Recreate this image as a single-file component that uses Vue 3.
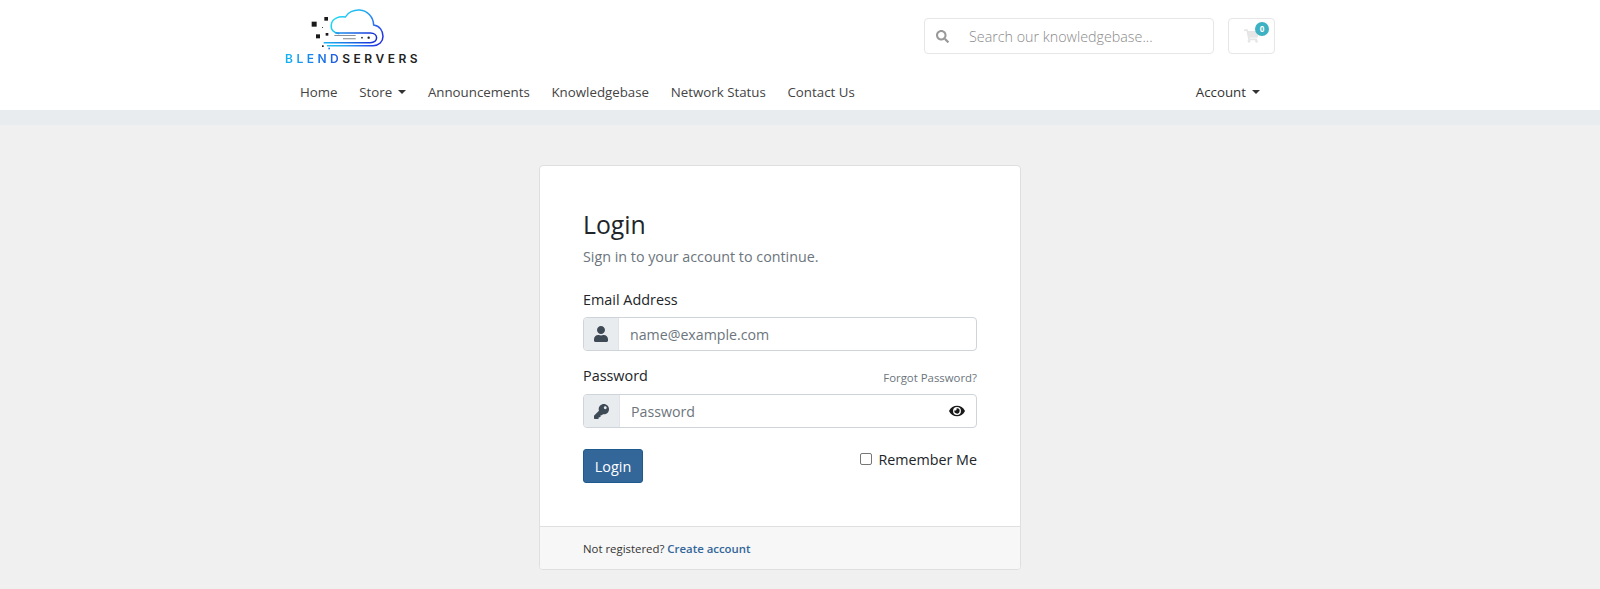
<script setup>
const navLeft = [
  { label: 'Home' },
  { label: 'Store', caret: true },
  { label: 'Announcements' },
  { label: 'Knowledgebase' },
  { label: 'Network Status' },
  { label: 'Contact Us' },
]
</script>

<template>
  <div class="page">
    <header class="header">
      <div class="container top">
        <div class="logo">
          <svg class="logo-mark" width="80" height="45" viewBox="110 20 240 135">
            <defs>
              <linearGradient id="lg" gradientUnits="userSpaceOnUse" x1="190" y1="40" x2="340" y2="135">
                <stop offset="0" stop-color="#1fdcf2" />
                <stop offset="0.45" stop-color="#22a8f2" />
                <stop offset="0.75" stop-color="#2a5cf0" />
                <stop offset="1" stop-color="#1a1fd6" />
              </linearGradient>
              <linearGradient id="lb" gradientUnits="userSpaceOnUse" x1="160" y1="125" x2="330" y2="125">
                <stop offset="0" stop-color="#19b4f2" />
                <stop offset="1" stop-color="#1a1fd6" />
              </linearGradient>
            </defs>
            <path d="M207 100 C190 98 180 88 183 72 C186 55 205 47 225 50 C232 36 250 28 268 29 C292 31 309 50 310 74 C328 76 338 92 338 108 C338 124 326 136 308 136 L170 136" fill="none" stroke="url(#lg)" stroke-width="4.500" />
            <path d="M160 127 L300 127 C325 127 325 98 300 98 L195 98" fill="none" stroke="url(#lb)" stroke-width="4.500" />
            <rect x="192" y="104" width="64" height="3" fill="#8a8f98" />
            <rect x="218" y="113" width="38" height="4" fill="#a0a4aa" />
            <rect x="124" y="64" width="15" height="15" fill="#1a1a1a" />
            <rect x="162" y="50" width="11" height="11" fill="#1a1a1a" />
            <rect x="137" y="102" width="12" height="12" fill="#1a1a1a" />
            <rect x="166" y="98" width="8" height="8" fill="#1a1a1a" />
            <rect x="155" y="80" width="3" height="3" fill="#444" />
            <rect x="155" y="135" width="5" height="5" fill="#1a1a1a" />
            <rect x="174" y="142" width="5" height="5" fill="#2a7cf0" />
            <circle cx="275" cy="112" r="2.500" fill="#1a1a1a" />
            <circle cx="295" cy="112" r="3.500" fill="#1a1a1a" />
          </svg>
          <div class="logo-text"><span class="blend">BLEND</span><span>SERVERS</span></div>
        </div>
        <div class="tools">
          <div class="search">
            <svg class="search-icon" width="13" height="13" viewBox="0 0 512 512"><path fill="#999" d="M505 442.7L405.3 343c-4.500-4.500-10.600-7-17-7H372c27.600-35.300 44-79.700 44-128C416 93.100 322.900 0 208 0S0 93.100 0 208s93.100 208 208 208c48.300 0 92.700-16.400 128-44v16.300c0 6.400 2.500 12.500 7 17l99.700 99.700c9.400 9.400 24.600 9.400 33.900 0l28.300-28.300c9.400-9.400 9.400-24.600.1-34zM208 336c-70.700 0-128-57.200-128-128 0-70.700 57.200-128 128-128 70.700 0 128 57.200 128 128 0 70.700-57.200 128-128 128z"/></svg>
            <span class="search-text">Search our knowledgebase...</span>
          </div>
          <div class="cart">
            <svg width="15" height="14" viewBox="0 0 576 512"><path fill="#e6e6e6" d="M528.100 301.300l47.300-208C578.800 78.300 567.400 64 552 64H159.200l-9.200-44.800C147.800 8 137.900 0 126.500 0H24C10.700 0 0 10.700 0 24v16c0 13.300 10.700 24 24 24h69.900l70.200 343.400C147.300 417.100 136 435.200 136 456c0 30.900 25.100 56 56 56s56-25.100 56-56c0-15.700-6.400-29.800-16.800-40h209.600C430.400 426.200 424 440.300 424 456c0 30.900 25.100 56 56 56s56-25.100 56-56c0-22.200-12.900-41.300-31.600-50.400l5.500-24.300c3.400-15-8-29.300-23.400-29.300H218.100l-6.500-32h293.100c11.200 0 20.900-7.800 23.400-18.700z"/></svg>
            <span class="badge">0</span>
          </div>
        </div>
      </div>
      <nav class="container nav">
        <div class="nav-group">
          <a v-for="item in navLeft" :key="item.label" class="nav-link">
            {{ item.label }}<i v-if="item.caret" class="caret"></i>
          </a>
        </div>
        <a class="nav-link account">Account<i class="caret"></i></a>
      </nav>
    </header>
    <div class="strip"></div>
    <main class="main">
      <section class="card">
        <div class="card-body">
          <h1 class="title">Login</h1>
          <p class="subtitle">Sign in to your account to continue.</p>

          <label class="label">Email Address</label>
          <div class="group">
            <span class="addon">
              <svg width="14" height="16" viewBox="0 0 448 512"><path fill="#3f4a57" d="M224 256c70.700 0 128-57.300 128-128S294.700 0 224 0 96 57.300 96 128s57.300 128 128 128zm89.600 32h-16.700c-22.200 10.200-46.900 16-72.900 16s-50.600-5.800-72.900-16h-16.700C60.200 288 0 348.200 0 422.400V464c0 26.500 21.500 48 48 48h352c26.500 0 48-21.500 48-48v-41.600c0-74.200-60.200-134.400-134.400-134.400z"/></svg>
            </span>
            <span class="placeholder">name@example.com</span>
          </div>

          <div class="pw-head">
            <label class="label flush">Password</label>
            <a class="forgot">Forgot Password?</a>
          </div>
          <div class="group">
            <span class="addon wide">
              <svg width="15" height="15" viewBox="0 0 512 512"><path fill="#3f4a57" d="M512 176.001C512 273.203 433.202 352 336 352c-11.220 0-22.190-1.062-32.827-3.069l-24.012 27.014A23.999 23.999 0 0 1 261.223 384H224v40c0 13.255-10.745 24-24 24h-40v40c0 13.255-10.745 24-24 24H24c-13.255 0-24-10.745-24-24v-78.059c0-6.365 2.529-12.470 7.029-16.971l161.802-161.802C163.108 213.814 160 195.271 160 176 160 78.798 238.797.001 335.999 0 433.488-.001 512 78.511 512 176.001zM336 128c0 26.510 21.490 48 48 48s48-21.490 48-48-21.490-48-48-48-48 21.490-48 48z"/></svg>
            </span>
            <span class="placeholder">Password</span>
            <svg class="eye" width="18" height="14" viewBox="0 0 576 512"><path fill="#1a1a1a" d="M572.520 241.400C518.290 135.590 410.930 64 288 64S57.680 135.640 3.480 241.410a32.350 32.350 0 0 0 0 29.190C57.710 376.410 165.070 448 288 448s230.320-71.640 284.520-177.410a32.350 32.350 0 0 0 0-29.190zM288 400a144 144 0 1 1 144-144 143.930 143.930 0 0 1-144 144zm0-240a95.310 95.310 0 0 0-25.310 3.790 47.850 47.850 0 0 1-66.900 66.900A95.780 95.780 0 1 0 288 160z"/></svg>
          </div>

          <div class="actions">
            <button class="btn" type="button">Login</button>
            <label class="remember"><span class="check"></span>Remember Me</label>
          </div>
        </div>
        <div class="card-footer">
          Not registered? <a class="create">Create account</a>
        </div>
      </section>
    </main>
  </div>
</template>

<style scoped>
.page {
  min-height: 589px;
  background: #f0f0f0;
  font-family: "Open Sans", sans-serif;
  color: #212529;
  overflow: hidden;
}
.header { background: #fff; height: 110px; padding-right: 40px; }
.container { width: 990px; margin: 0 auto; }
.top { display: flex; justify-content: space-between; height: 74px; }
.logo { width: 140px; padding-top: 7px; }
.logo-mark { display: block; margin-left: 22px; }
.logo-text {
  margin-top: 1px;
  font-family: Inter, sans-serif;
  font-size: 12px;
  line-height: 12px;
  font-weight: 600;
  letter-spacing: 3.5px;
  color: #222;
  white-space: nowrap;
}
.blend {
  background: linear-gradient(90deg, #12b4f5, #1c50e0);
  -webkit-background-clip: text;
  background-clip: text;
  color: transparent;
}
.tools { display: flex; gap: 14px; padding-top: 18px; }
.search {
  width: 290px;
  height: 36px;
  box-sizing: border-box;
  border: 1px solid #e6e6e6;
  border-radius: 4px;
  display: flex;
  align-items: center;
  padding-left: 11px;
  gap: 20px;
}
.search-icon { flex: none; }
.search-text { font-size: 14.3px; color: #8a8a8a; font-weight: 300; }
.cart {
  position: relative;
  width: 47px;
  height: 36px;
  box-sizing: border-box;
  border: 1px solid #e6e6e6;
  border-radius: 4px;
  display: flex;
  align-items: center;
  justify-content: center;
}
.badge {
  position: absolute;
  top: 3px;
  right: 5px;
  width: 14px;
  height: 14px;
  border-radius: 50%;
  background: #3eb1c2;
  color: #fff;
  font-size: 8px;
  font-weight: 700;
  line-height: 14px;
  text-align: center;
}
.nav { display: flex; justify-content: space-between; height: 36px; align-items: center; }
.nav-group { display: flex; gap: 21.7px; padding-left: 15px; }
.nav-link { font-size: 13.3px; color: #444; line-height: 20px; white-space: nowrap; }
.account { margin-right: 15px; color: #333; }
.caret {
  display: inline-block;
  margin-left: 6px;
  vertical-align: 3px;
  border-top: 4px solid #333;
  border-left: 4px solid transparent;
  border-right: 4px solid transparent;
}
.strip { height: 15px; background: #e9ecef; }
.main { display: flex; justify-content: center; padding: 40px 40px 20px 0; }
.card {
  width: 482px;
  box-sizing: border-box;
  background: #fff;
  border: 1px solid #dfdfdf;
  border-radius: 4px;
  overflow: hidden;
}
.card-body { padding: 42px 43px; height: 360px; box-sizing: border-box; }
.title { margin: 0; font-size: 24.8px; font-weight: 400; line-height: 33px; color: #212529; }
.subtitle { margin: 6px 0 0; font-size: 14.3px; line-height: 20px; color: #6c757d; }
.label { display: block; margin-top: 23px; margin-bottom: 7px; font-size: 14.4px; line-height: 20px; color: #212529; }
.label.flush { margin: 0; }
.group {
  height: 34px;
  box-sizing: border-box;
  border: 1px solid #ced4da;
  border-radius: 4px;
  display: flex;
  align-items: center;
  overflow: hidden;
  position: relative;
}
.addon {
  flex: none;
  width: 34px;
  height: 100%;
  background: #e9ecef;
  border-right: 1px solid #e0e3e7;
  display: flex;
  align-items: center;
  justify-content: center;
}
.addon.wide { width: 35px; }
.placeholder { margin-left: 11px; font-size: 14.2px; color: #6c757d; }
.pw-head {
  display: flex;
  justify-content: space-between;
  align-items: center;
  margin-top: 15px;
  margin-bottom: 8px;
}
.forgot { font-size: 11.4px; color: #6c757d; line-height: 16px; padding-top: 4px; }
.eye { position: absolute; right: 10px; top: 9px; }
.actions { display: flex; justify-content: space-between; margin-top: 21px; }
.btn {
  width: 60px;
  height: 34px;
  padding: 0;
  background: #336699;
  color: #fff;
  border: 1px solid #1f5a8f;
  border-radius: 3px;
  font-family: inherit;
  font-size: 14.4px;
}
.remember { display: flex; align-items: center; height: 20px; font-size: 14.3px; color: #212529; }
.check {
  width: 12px;
  height: 12px;
  box-sizing: border-box;
  border: 1.5px solid #767676;
  border-radius: 2px;
  margin-right: 6px;
}
.card-footer {
  height: 43px;
  box-sizing: border-box;
  background: #f7f7f7;
  border-top: 1px solid #dfdfdf;
  padding: 14px 43px 0;
  font-size: 11.4px;
  line-height: 16px;
  color: #333;
}
.create { color: #336699; font-weight: 600; }
</style>
